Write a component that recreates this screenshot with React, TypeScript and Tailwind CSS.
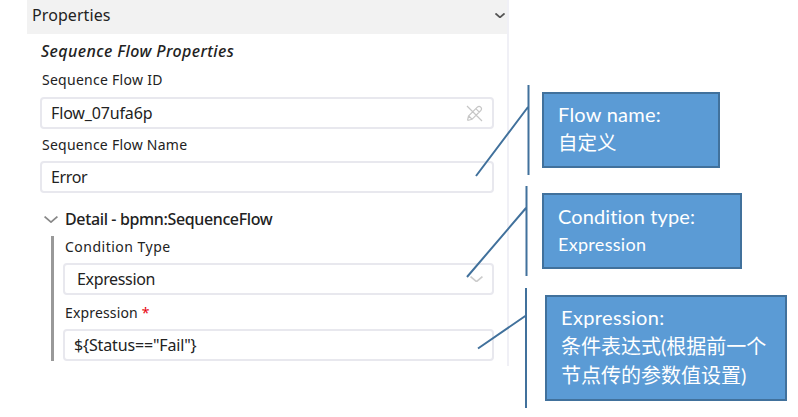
import type { ReactNode } from 'react';

function Label({ children, className = '' }: { children: ReactNode; className?: string }) {
  return <div className={`flex items-center whitespace-nowrap pl-[2px] text-[14px] leading-[20px] text-[#222] ${className}`}>{children}</div>;
}

function Field({ children, icon, className = '' }: { children: ReactNode; icon?: ReactNode; className?: string }) {
  return (
    <div className={`flex h-[32px] items-center justify-between rounded-[4px] border-2 border-[#e8e8ee] bg-white pr-[9px] text-[16px] leading-[22px] text-[#222] ${className}`}>
      <span className="whitespace-nowrap">{children}</span>
      {icon}
    </div>
  );
}

function EditOff() {
  return (
    <svg width="17" height="17" viewBox="0 0 17 17" fill="none" stroke="#c6c6c6" strokeWidth="1.2">
      <path d="M1 1l15 15M1.5 15.5l1-4.5 8.8-8.8q1.8-1.6 3.4 0t.1 3.3L6 14.3l-4.5 1.2M9.8 3.7l3.5 3.5M2.8 11l3.2 3.2" />
    </svg>
  );
}

function Chevron({ size, color, width = 1.5 }: { size: number; color: string; width?: number }) {
  return (
    <svg width={size} height={size / 2} viewBox="0 0 12 6" fill="none" stroke={color} strokeWidth={width}>
      <path d="M.5 .5L6 5.2 11.5 .5" />
    </svg>
  );
}

export default function App() {
  return (
    <div className="relative h-[417px] w-[798px] overflow-hidden bg-white font-['Noto_Sans','Open_Sans',sans-serif]">
      <section className="ml-[27px] h-[366px] w-[482px] border-r-2 border-[#f0f0f6]">
        <header className="flex h-[34px] items-start justify-between bg-[#f2f2f2] pl-[5px] pr-[2px] text-[16px] text-[#222]">
          <h1 className="mt-[4px] leading-[22px] tracking-[0.08px]">Properties</h1>
          <span className="mt-[13px]"><Chevron size={10} color="#555" width={2.2} /></span>
        </header>
        <div className="pl-[13px] pr-[13px] pt-[6px]">
          <h2 className="whitespace-nowrap pl-px text-[16px] font-medium italic leading-[22px] tracking-[0.4px] text-[#222]">Sequence Flow Properties</h2>
          <Label className="mt-[8px] tracking-[0.27px]">Sequence Flow ID</Label>
          <Field className="mt-[7px] pl-[9px] tracking-[-0.15px]" icon={<EditOff />}>Flow_07ufa6p</Field>
          <Label className="mt-[6px] tracking-[0.25px]">Sequence Flow Name</Label>
          <Field className="mt-[6px] pl-[9px] tracking-[-0.35px]">Error</Field>
          <div className="mt-[15px] flex h-[22px] items-center gap-[7px] pl-[4px] text-[16px] font-medium tracking-[-0.37px] text-[#222]">
            <Chevron size={14} color="#888" />
            <span className="whitespace-nowrap">Detail - bpmn:SequenceFlow</span>
          </div>
          <div className="ml-[11px] mt-[6px] h-[125px] border-l-[3px] border-[#999] pl-[9px]">
            <Label className="pt-px tracking-[0.5px]">Condition Type</Label>
            <Field className="mt-[6px] pl-[12px] tracking-[-0.35px]" icon={<Chevron size={13} color="#ccc" />}>Expression</Field>
            <Label className="mt-[8px] tracking-[0.15px]">Expression<span className="ml-[4px] text-red-600">*</span></Label>
            <Field className="mt-[6px] pl-[9px] tracking-[-0.15px]">{'${Status=="Fail"}'}</Field>
          </div>
        </div>
      </section>

      <svg className="absolute inset-0" width="798" height="417" fill="none" stroke="#41719c" strokeWidth="2">
        <path d="M528.5 85V175M476 176L528 107M526.5 186V276M467 277L526 208M526 288V408M478 348.5L526 315.5" />
      </svg>
      <div className="absolute left-[542px] top-[92px] h-[76px] w-[178px] border-2 border-[#41719c] bg-[#5b9bd5] pl-[14px] pt-[6px] font-[Lato,'Noto_Sans_CJK_SC',sans-serif] text-[20px] leading-[28px] text-white">
        <p className="tracking-[0.25px]">Flow name:</p><p className="mt-px text-[19.5px]">自定义</p>
      </div>
      <div className="absolute left-[542px] top-[193px] h-[76px] w-[200px] border-2 border-[#41719c] bg-[#5b9bd5] pl-[14px] pt-[7px] font-[Lato,sans-serif] text-[20px] leading-[28px] text-white">
        <p className="tracking-[0.1px]">Condition type:</p><p className="text-[18px] tracking-[0.3px]">Expression</p>
      </div>
      <div className="absolute left-[545px] top-[295px] h-[106px] w-[242px] border-2 border-[#41719c] bg-[#5b9bd5] pl-[14px] pt-[6px] font-[Lato,'Noto_Sans_CJK_SC',sans-serif] text-[20px] leading-[28px] text-white">
        <p className="tracking-[0.35px]">Expression:</p><p className="mt-px whitespace-nowrap">条件表达式(根据前一个</p><p className="mt-px whitespace-nowrap">节点传的参数值设置)</p>
      </div>
    </div>
  );
}
